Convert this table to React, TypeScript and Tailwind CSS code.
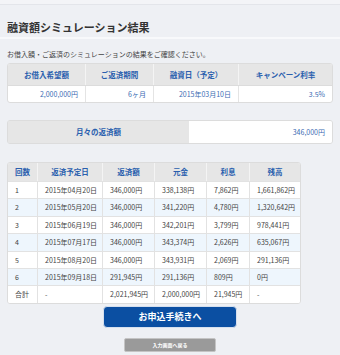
import React from 'react';

const font = { fontFamily: '"Noto Sans CJK JP", "Noto Sans", sans-serif' };

const summaryHeads = ['お借入希望額', 'ご返済期間', '融資日（予定）', 'キャンペーン利率'];
const summaryVals = ['2,000,000円', '6ヶ月', '2015年03月10日', '3.5%'];
const summaryCols = 'grid grid-cols-[77px_68px_85px_1fr]';

const scheduleHeads = ['回数', '返済予定日', '返済額', '元金', '利息', '残高'];
const rows = [
  ['1', '2015年04月20日', '346,000円', '338,138円', '7,862円', '1,661,862円'],
  ['2', '2015年05月20日', '346,000円', '341,220円', '4,780円', '1,320,642円'],
  ['3', '2015年06月19日', '346,000円', '342,201円', '3,799円', '978,441円'],
  ['4', '2015年07月17日', '346,000円', '343,374円', '2,626円', '635,067円'],
  ['5', '2015年08月20日', '346,000円', '343,931円', '2,069円', '291,136円'],
  ['6', '2015年09月18日', '291,945円', '291,136円', '809円', '0円'],
  ['合計', '-', '2,021,945円', '2,000,000円', '21,945円', '-'],
];
const scheduleCols = 'grid grid-cols-[29px_65px_52px_52px_43px_1fr]';

export default function App() {
  return (
    <div className="w-[340px] h-[355px] bg-[#eef0f4] overflow-hidden" style={font}>
      {/* top strip */}
      <div className="h-[5px] bg-[#f3f4f7] border-b border-[#e3e5ea]" />

      {/* Title */}
      <div className="px-[7px] pt-[15px] pb-[3px] border-b-2 border-[#f8f9fb]">
        <h1 className="text-[11px] leading-[14px] font-bold text-[#333]">融資額シミュレーション結果</h1>
      </div>

      <div className="px-[7px]">
        <p className="mt-[10px] text-[7px] leading-[10px] text-[#444]">
          お借入額・ご返済のシミュレーションの結果をご確認ください。
        </p>

        {/* Summary table */}
        <div className="mt-[4px] border border-[#dcdcdc] rounded-[3px] overflow-hidden bg-white">
          <div className={`${summaryCols} h-[21px] bg-[#e6e6e6]`}>
            {summaryHeads.map((h, i) => (
              <div
                key={h}
                className={`flex items-center justify-center text-[7.5px] font-bold text-[#2a5fae] ${i > 0 ? 'border-l border-[#f4f4f4]' : ''}`}
              >
                {h}
              </div>
            ))}
          </div>
          <div className={`${summaryCols} h-[17px] border-t border-[#dcdcdc]`}>
            {summaryVals.map((v, i) => (
              <div
                key={v}
                className={`flex items-center justify-end pr-[7px] text-[7px] text-[#3b6cb3] ${i > 0 ? 'border-l border-[#e4e4e4]' : ''}`}
              >
                {v}
              </div>
            ))}
          </div>
        </div>

        {/* Monthly payment */}
        <div className="mt-[17px] h-[24px] flex border border-[#dcdcdc] rounded-[3px] overflow-hidden">
          <div className="w-[181px] bg-[#e6e6e6] flex items-center justify-center text-[7.5px] font-bold text-[#2a5fae]">
            月々の返済額
          </div>
          <div className="flex-1 bg-white flex items-center justify-end pr-[7px] text-[7px] text-[#3b6cb3]">
            346,000円
          </div>
        </div>

        {/* Schedule table */}
        <div className="mt-[18px] w-[294px] border border-[#dcdcdc] rounded-[3px] overflow-hidden bg-white">
          <div className={`${scheduleCols} h-[18px] bg-[#e6e6e6]`}>
            {scheduleHeads.map((h, i) => (
              <div
                key={h}
                className={`flex items-center justify-center text-[7.5px] font-bold text-[#2a5fae] ${i > 0 ? 'border-l border-[#f4f4f4]' : ''}`}
              >
                {h}
              </div>
            ))}
          </div>
          {rows.map((r, ri) => (
            <div
              key={ri}
              className={`${scheduleCols} h-[17.4px] border-t border-[#e2e2e2] ${ri % 2 === 1 ? 'bg-[#eef6fd]' : 'bg-white'}`}
            >
              {r.map((c, ci) => (
                <div
                  key={ci}
                  className={`flex items-center pl-[7px] text-[7px] text-[#444] whitespace-nowrap ${ci > 0 ? 'border-l border-[#e2e2e2]' : ''}`}
                >
                  {c}
                </div>
              ))}
            </div>
          ))}
        </div>

        {/* Buttons */}
        <div className="flex flex-col items-center">
          <button className="mt-[2px] w-[134px] h-[22px] rounded-[4px] bg-[#0b4fa2] border border-[#d6e0ee] text-white text-[9px] font-bold">
            お申込手続きへ
          </button>
          <button className="mt-[10px] w-[92px] h-[14px] rounded-[2px] bg-[#9a9a9a] border border-[#c4c4c4] text-white text-[5px] font-bold leading-none">
            入力画面へ戻る
          </button>
        </div>
      </div>
    </div>
  );
}
